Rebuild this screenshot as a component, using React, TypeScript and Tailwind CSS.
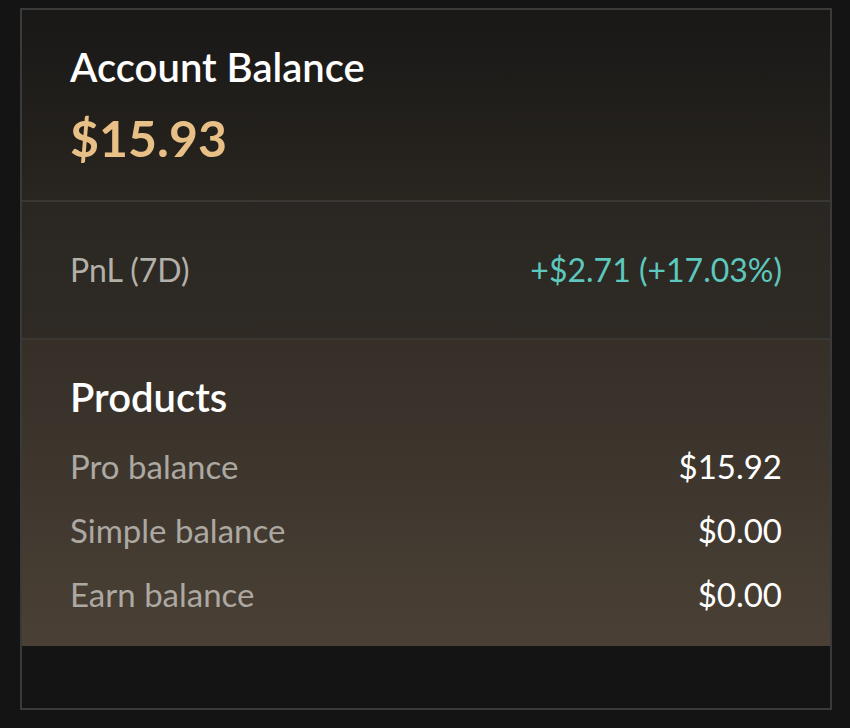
import React from 'react';

const rows = [
  { label: 'Pro balance', value: '$15.92' },
  { label: 'Simple balance', value: '$0.00' },
  { label: 'Earn balance', value: '$0.00' },
];

const App: React.FC = () => {
  return (
    <div
      className="min-h-screen bg-[#141414] pt-[8px] pl-[20px]"
      style={{ fontFamily: 'Lato, "Noto Sans", sans-serif' }}
    >
      <div className="flex h-[702px] w-[812px] flex-col border-2 border-[#3a3a3a]">
        <div className="h-[192px] shrink-0 border-b-2 border-[#3a3835] bg-gradient-to-b from-[#191817] to-[#29251f] px-[48px] pt-[33px]">
          <h1 className="text-[40px] leading-[48px] font-semibold text-white">Account Balance</h1>
          <p className="mt-[17px] text-[50px] leading-[60px] font-bold text-[#e8bf86]">$15.93</p>
        </div>
        <div className="flex h-[138px] shrink-0 items-center justify-between border-b-2 border-[#3a3835] bg-gradient-to-b from-[#2a2722] to-[#2f2a24] px-[48px]">
          <span className="text-[32px] text-[#b3afa9]">PnL (7D)</span>
          <span className="text-[32px] text-[#5cc8be]">+$2.71 (+17.03%)</span>
        </div>
        <div className="h-[306px] shrink-0 bg-gradient-to-b from-[#352f28] to-[#4a4035] px-[48px] pt-[33px]">
          <h2 className="text-[40px] leading-[48px] font-semibold text-white">Products</h2>
          <div className="mt-[14px] flex flex-col">
            {rows.map((r) => (
              <div key={r.label} className="flex h-[64px] items-center justify-between text-[33px]">
                <span className="text-[#aca8a2]">{r.label}</span>
                <span className="text-white">{r.value}</span>
              </div>
            ))}
          </div>
        </div>
        <div className="flex-1 bg-[#141414]" />
      </div>
    </div>
  );
};

export default App;
